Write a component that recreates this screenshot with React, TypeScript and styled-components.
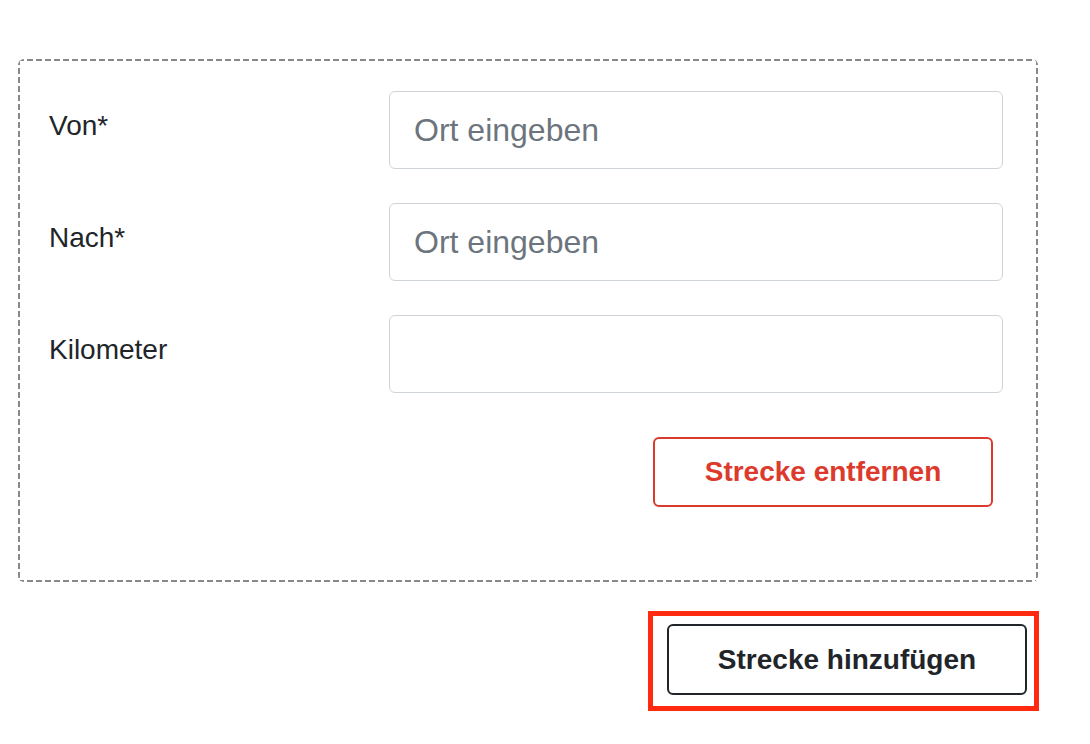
import React from "react";
import styled, { createGlobalStyle } from "styled-components";

const GlobalStyle = createGlobalStyle`
  body {
    margin: 0;
    background: #ffffff;
    font-family: "Liberation Sans", Arial, sans-serif;
    color: #212529;
  }
`;

interface RouteField {
  label: string;
  placeholder?: string;
}

const fields: RouteField[] = [
  { label: "Von*", placeholder: "Ort eingeben" },
  { label: "Nach*", placeholder: "Ort eingeben" },
  { label: "Kilometer" },
];

function App() {
  return (
    <Page>
      <GlobalStyle />
      <RouteBox>
        {fields.map((field) => (
          <FieldRow key={field.label}>
            <Label>{field.label}</Label>
            <Input type="text" placeholder={field.placeholder} />
          </FieldRow>
        ))}
        <RemoveRow>
          <RemoveButton>Strecke entfernen</RemoveButton>
        </RemoveRow>
      </RouteBox>

      <Footer>
        <Highlight>
          <AddButton>Strecke hinzufügen</AddButton>
        </Highlight>
      </Footer>
    </Page>
  );
}

export default App;

const Page = styled.div`
  padding: 59px 0 0 18px;
  width: 1020px;
`;

// dashes of 6px with 3px gaps, like the longer dash pattern of the original
const dash = "#888888";
const RouteBox = styled.div`
  border-radius: 6px;
  padding: 32px 35px 75px 31px;
  display: flex;
  flex-direction: column;
  gap: 34px;
  background:
    linear-gradient(to right, ${dash} 6px, transparent 6px) top left / 9px 2px repeat-x,
    linear-gradient(to right, ${dash} 6px, transparent 6px) bottom left / 9px 2px repeat-x,
    linear-gradient(to bottom, ${dash} 6px, transparent 6px) top left / 2px 9px repeat-y,
    linear-gradient(to bottom, ${dash} 6px, transparent 6px) top right / 2px 9px repeat-y;
`;

const FieldRow = styled.div`
  display: grid;
  grid-template-columns: 340px 1fr;
  align-items: start;
`;

const Label = styled.label`
  font-size: 28px;
  line-height: 42px;
  padding-top: 14px;
  color: #212529;
`;

const Input = styled.input`
  box-sizing: border-box;
  height: 78px;
  width: 100%;
  border: 1px solid #ced4da;
  border-radius: 6px;
  padding: 0 24px;
  font-family: "Liberation Sans", Arial, sans-serif;
  font-size: 32px;
  color: #212529;
  outline: none;

  &::placeholder {
    color: #6c757d;
  }
`;

const RemoveRow = styled.div`
  display: flex;
  justify-content: flex-end;
  padding-right: 10px;
  margin-top: 10px;
`;

const BaseButton = styled.button`
  box-sizing: border-box;
  background: #ffffff;
  border-radius: 6px;
  font-family: "Liberation Sans", Arial, sans-serif;
  font-weight: 700;
  font-size: 28px;
  cursor: pointer;
`;

const RemoveButton = styled(BaseButton)`
  width: 340px;
  height: 70px;
  border: 2px solid #dc3a2c;
  color: #dc3a2c;
`;

const Footer = styled.div`
  display: flex;
  justify-content: flex-end;
  margin-top: 29px;
  margin-right: -1px;
`;

const Highlight = styled.div`
  border: 5px solid #ff2a10;
  padding: 8px 7px 11px 14px;
`;

const AddButton = styled(BaseButton)`
  width: 360px;
  height: 71px;
  border: 2px solid #212529;
  color: #212529;
`;
